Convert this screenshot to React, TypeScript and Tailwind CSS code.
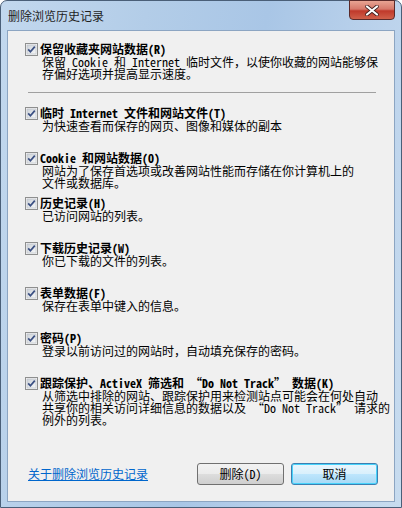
const FONT = '"Noto Sans Mono CJK SC", "Noto Sans CJK SC", sans-serif';

const items = [
  { title: '临时 Internet 文件和网站文件(T)', lines: ['为快速查看而保存的网页、图像和媒体的副本'] },
  {
    title: 'Cookie 和网站数据(O)',
    lines: ['网站为了保存首选项或改善网站性能而存储在你计算机上的', '文件或数据库。'],
  },
  { title: '历史记录(H)', lines: ['已访问网站的列表。'] },
  { title: '下载历史记录(W)', lines: ['你已下载的文件的列表。'] },
  { title: '表单数据(F)', lines: ['保存在表单中键入的信息。'] },
  { title: '密码(P)', lines: ['登录以前访问过的网站时，自动填充保存的密码。'] },
  {
    title: '跟踪保护、ActiveX 筛选和 “Do Not Track” 数据(K)',
    lines: [
      '从筛选中排除的网站、跟踪保护用来检测站点可能会在何处自动',
      '共享你的相关访问详细信息的数据以及 “Do Not Track” 请求的',
      '例外的列表。',
    ],
  },
];

function Checkbox() {
  return (
    <svg width="13" height="13" viewBox="0 0 13 13" className="shrink-0">
      <defs>
        <linearGradient id="cbg" x1="0" y1="0" x2="1" y2="1">
          <stop offset="0" stopColor="#cdd2d8" />
          <stop offset="1" stopColor="#f7f8f9" />
        </linearGradient>
      </defs>
      <rect x="0.5" y="0.5" width="12" height="12" fill="#f4f4f4" stroke="#8e8f8f" />
      <rect x="2" y="2" width="9" height="9" fill="url(#cbg)" stroke="#b6bbc3" strokeWidth="0.6" />
      <path d="M3.2 6.4 L5.4 8.8 L9.8 3.6" fill="none" stroke="#3a4f82" strokeWidth="1.7" />
    </svg>
  );
}

function Item({ title, lines }: { title: string; lines: string[] }) {
  return (
    <div className="flex h-[45px] items-start pl-[17px]">
      <div className="flex h-[14px] items-center">
        <Checkbox />
      </div>
      <div className="ml-[2px] min-w-0 flex-1 pr-[10px]">
        <div className="whitespace-nowrap text-[12px] font-bold leading-[14px] text-black">{title}</div>
        {lines.map((l) => (
          <div key={l} className="ml-[2px] whitespace-nowrap text-[12px] leading-[12px] text-black">
            {l}
          </div>
        ))}
      </div>
    </div>
  );
}

export default function App() {
  return (
    <div
      className="flex h-[508px] w-[402px] flex-col rounded-t-[7px] border border-[#4a5f78] bg-[linear-gradient(100deg,#c2d8ee_0%,#b3cde8_30%,#a9c6e6_55%,#bcd3ec_80%,#c8dcef_100%)]"
      style={{ fontFamily: FONT }}
    >
      <div className="relative flex h-[29px] shrink-0 items-center pl-[7px]">
        <span className="text-[12px] text-[#1e1e1e]">删除浏览历史记录</span>
        <div className="absolute right-[6px] top-[-1px] flex h-[20px] w-[46px] items-center justify-center rounded-b-[4px] border border-[#5a2a2a] bg-[linear-gradient(to_bottom,#e8a493_0%,#d6786a_45%,#c0392b_55%,#d0604a_100%)]">
          <svg width="14" height="11" viewBox="0 0 14 11">
            <path d="M2 1.5 L12 9.5 M12 1.5 L2 9.5" stroke="#3a1a1a" strokeWidth="3.6" strokeLinecap="round" />
            <path d="M2 1.5 L12 9.5 M12 1.5 L2 9.5" stroke="#ffffff" strokeWidth="2.2" strokeLinecap="round" />
          </svg>
        </div>
      </div>
      <div className="mx-[6px] mb-[5px] flex flex-1 flex-col border border-[#8ca5c2] bg-[#f0f0f0]">
        <div className="pt-[11px]">
          <div className="flex h-[38px] items-start pl-[17px]">
            <div className="flex h-[14px] items-center">
              <Checkbox />
            </div>
            <div className="ml-[2px] min-w-0 flex-1">
              <div className="whitespace-nowrap text-[12px] font-bold leading-[14px] text-black">
                保留收藏夹网站数据(R)
              </div>
              <div className="ml-[2px] whitespace-nowrap text-[12px] leading-[12px] text-black">
                保留 Cookie 和 Internet 临时文件，以使你收藏的网站能够保
              </div>
              <div className="ml-[2px] whitespace-nowrap text-[12px] leading-[12px] text-black">
                存偏好选项并提高显示速度。
              </div>
            </div>
          </div>
          <div className="ml-[20px] mr-[18px] mt-[12px] h-px bg-[#a0a0a0]" />
          <div className="mt-[13px]">
            {items.map((it) => (
              <Item key={it.title} title={it.title} lines={it.lines} />
            ))}
          </div>
        </div>
        <div className="mt-auto flex items-center pb-[16px] pl-[20px] pr-[16px]">
          <a href="#" className="text-[12px] text-[#0066cc] underline">
            关于删除浏览历史记录
          </a>
          <div className="ml-auto flex gap-[7px]">
            <button className="h-[22px] w-[87px] rounded-[3px] border border-[#707070] bg-[linear-gradient(to_bottom,#f2f2f2_0%,#ebebeb_50%,#dddddd_50%,#cfcfcf_100%)] text-[12px] text-black">
              删除(D)
            </button>
            <button className="h-[22px] w-[87px] rounded-[3px] border border-[#3c7fb1] bg-[linear-gradient(to_bottom,#eaf6fd_0%,#d9f0fc_50%,#bee6fd_50%,#a7d9f5_100%)] text-[12px] text-black shadow-[inset_0_0_0_1px_#48d3fb]">
              取消
            </button>
          </div>
        </div>
      </div>
    </div>
  );
}
